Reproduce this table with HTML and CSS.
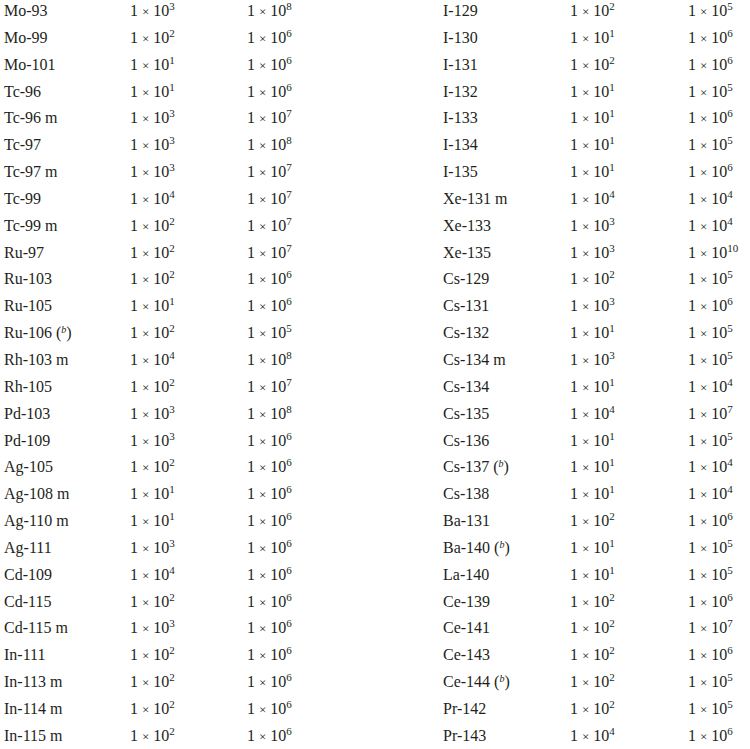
FILE: index.html
```html
<!DOCTYPE html>
<html lang="en">
<head>
  <meta charset="UTF-8">
  <title>Nuclide exemption values</title>
  <link rel="stylesheet" href="styles.css">
</head>
<body>
  <main class="nuclides" id="nuclideTable"></main>

  <script>
    // [left nuclide, conc, activity, right nuclide, conc, activity]
    const rows = [
      ["Mo-93", 3, 8, "I-129", 2, 5],
      ["Mo-99", 2, 6, "I-130", 1, 6],
      ["Mo-101", 1, 6, "I-131", 2, 6],
      ["Tc-96", 1, 6, "I-132", 1, 5],
      ["Tc-96 m", 3, 7, "I-133", 1, 6],
      ["Tc-97", 3, 8, "I-134", 1, 5],
      ["Tc-97 m", 3, 7, "I-135", 1, 6],
      ["Tc-99", 4, 7, "Xe-131 m", 4, 4],
      ["Tc-99 m", 2, 7, "Xe-133", 3, 4],
      ["Ru-97", 2, 7, "Xe-135", 3, 10],
      ["Ru-103", 2, 6, "Cs-129", 2, 5],
      ["Ru-105", 1, 6, "Cs-131", 3, 6],
      ["Ru-106 (b)", 2, 5, "Cs-132", 1, 5],
      ["Rh-103 m", 4, 8, "Cs-134 m", 3, 5],
      ["Rh-105", 2, 7, "Cs-134", 1, 4],
      ["Pd-103", 3, 8, "Cs-135", 4, 7],
      ["Pd-109", 3, 6, "Cs-136", 1, 5],
      ["Ag-105", 2, 6, "Cs-137 (b)", 1, 4],
      ["Ag-108 m", 1, 6, "Cs-138", 1, 4],
      ["Ag-110 m", 1, 6, "Ba-131", 2, 6],
      ["Ag-111", 3, 6, "Ba-140 (b)", 1, 5],
      ["Cd-109", 4, 6, "La-140", 1, 5],
      ["Cd-115", 2, 6, "Ce-139", 2, 6],
      ["Cd-115 m", 3, 6, "Ce-141", 2, 7],
      ["In-111", 2, 6, "Ce-143", 2, 6],
      ["In-113 m", 2, 6, "Ce-144 (b)", 2, 5],
      ["In-114 m", 2, 6, "Pr-142", 2, 5],
      ["In-115 m", 2, 6, "Pr-143", 4, 6]
    ];

    function nuclide(name) {
      return name.replace(" (b)", ' (<sup class="note">b</sup>)');
    }

    function power(exp) {
      return `1 <span class="times">×</span> 10<sup class="exp">${exp}</sup>`;
    }

    const table = document.getElementById("nuclideTable");
    let html = "";
    rows.forEach(r => {
      html += `<div class="cell">${nuclide(r[0])}</div>`;
      html += `<div class="cell">${power(r[1])}</div>`;
      html += `<div class="cell">${power(r[2])}</div>`;
      html += `<div class="cell">${nuclide(r[3])}</div>`;
      html += `<div class="cell">${power(r[4])}</div>`;
      html += `<div class="cell">${power(r[5])}</div>`;
    });
    table.innerHTML = html;
  </script>
</body>
</html>
```

FILE: styles.css
```css
body {
  font-family: 'Liberation Serif', 'Times New Roman', serif;
  font-size: 16px;
  color: #231f20;
  background: #fff;
  margin: 0;
  padding: 0;
}

.nuclides {
  display: grid;
  grid-template-columns: 126px 117px 196px 127px 118px 1fr;
  grid-auto-rows: 26.85px;
  padding-left: 4px;
  margin-top: -2px;
}

.cell {
  line-height: 26.85px;
  white-space: nowrap;
}

.times {
  font-size: 13px;
}

.exp {
  font-size: 11px;
  line-height: 0;
  vertical-align: 6px;
}

.note {
  font-size: 10px;
  font-style: italic;
  line-height: 0;
  vertical-align: 5px;
}
```
